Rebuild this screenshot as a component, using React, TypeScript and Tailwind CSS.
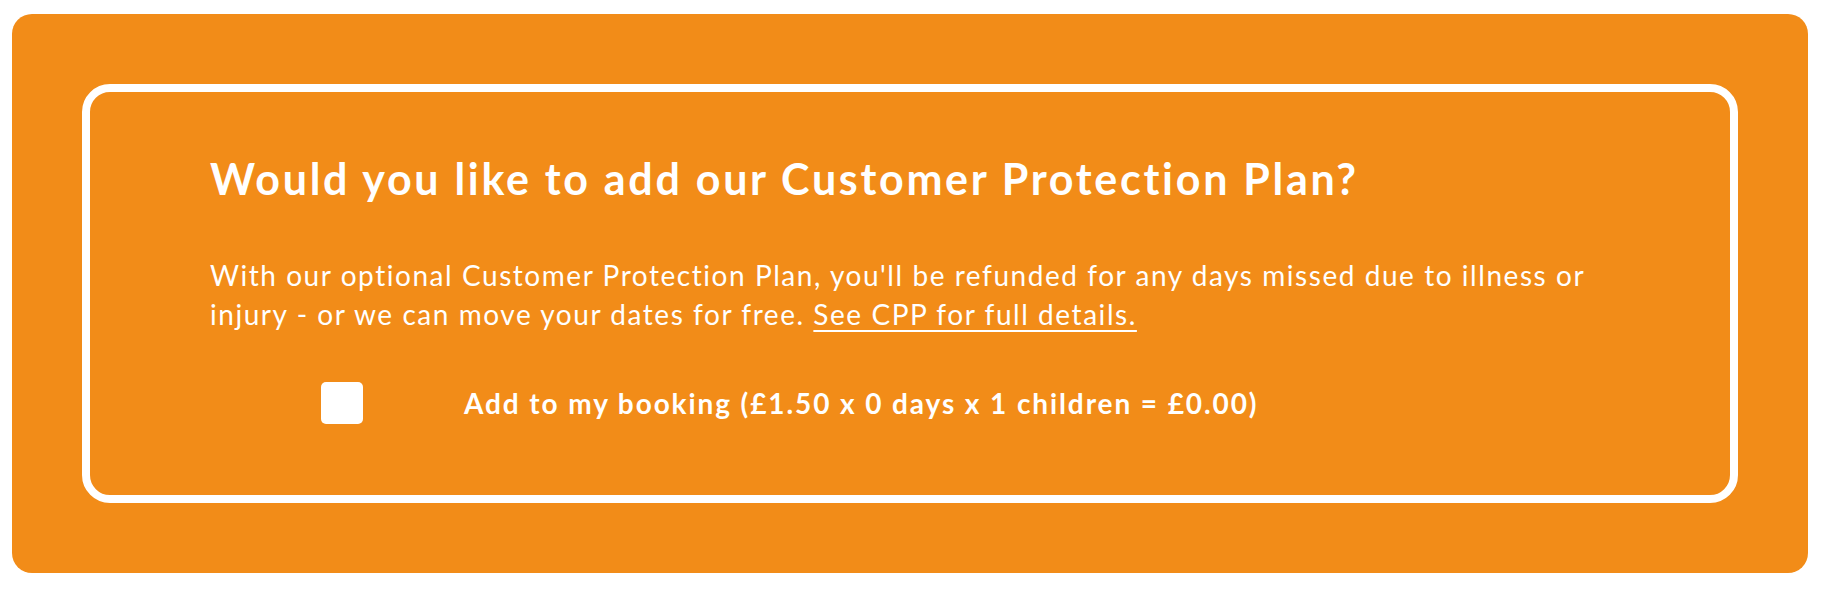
import React from "react"

const App = () => {
  return (
    <div className="w-[1822px] h-[600px] bg-white pt-[14px] pl-[12px]">
      <div className="w-[1796px] h-[559px] bg-[#F28C18] rounded-[20px] p-[70px]">
        <div
          className="h-[419px] border-[8px] border-white rounded-[28px] pl-[120px] pt-[61px] text-white"
          style={{ fontFamily: "Lato, 'Open Sans', sans-serif" }}
        >
          <h1 className="text-[43px] font-bold leading-[52px] tracking-[2.7px]">
            Would you like to add our Customer Protection Plan?
          </h1>
          <p className="mt-[51px] text-[28px] leading-[39px] font-normal tracking-[1.55px] max-w-[1430px]">
            With our optional Customer Protection Plan, you'll be refunded for any days missed due to illness or
            injury - or we can move your dates for free.{" "}
            <a href="#" className="underline underline-offset-[5px] decoration-2">
              See CPP for full details.
            </a>
          </p>
          <label className="mt-[48px] flex items-center pl-[111px] gap-[101px] cursor-pointer">
            <input type="checkbox" className="peer sr-only" />
            <span className="w-[42px] h-[42px] bg-white rounded-[5px] shrink-0"></span>
            <span className="text-[28px] font-bold leading-[42px] tracking-[1.9px]">
              Add to my booking (£1.50 x 0 days x 1 children = £0.00)
            </span>
          </label>
        </div>
      </div>
    </div>
  )
}

export default App
